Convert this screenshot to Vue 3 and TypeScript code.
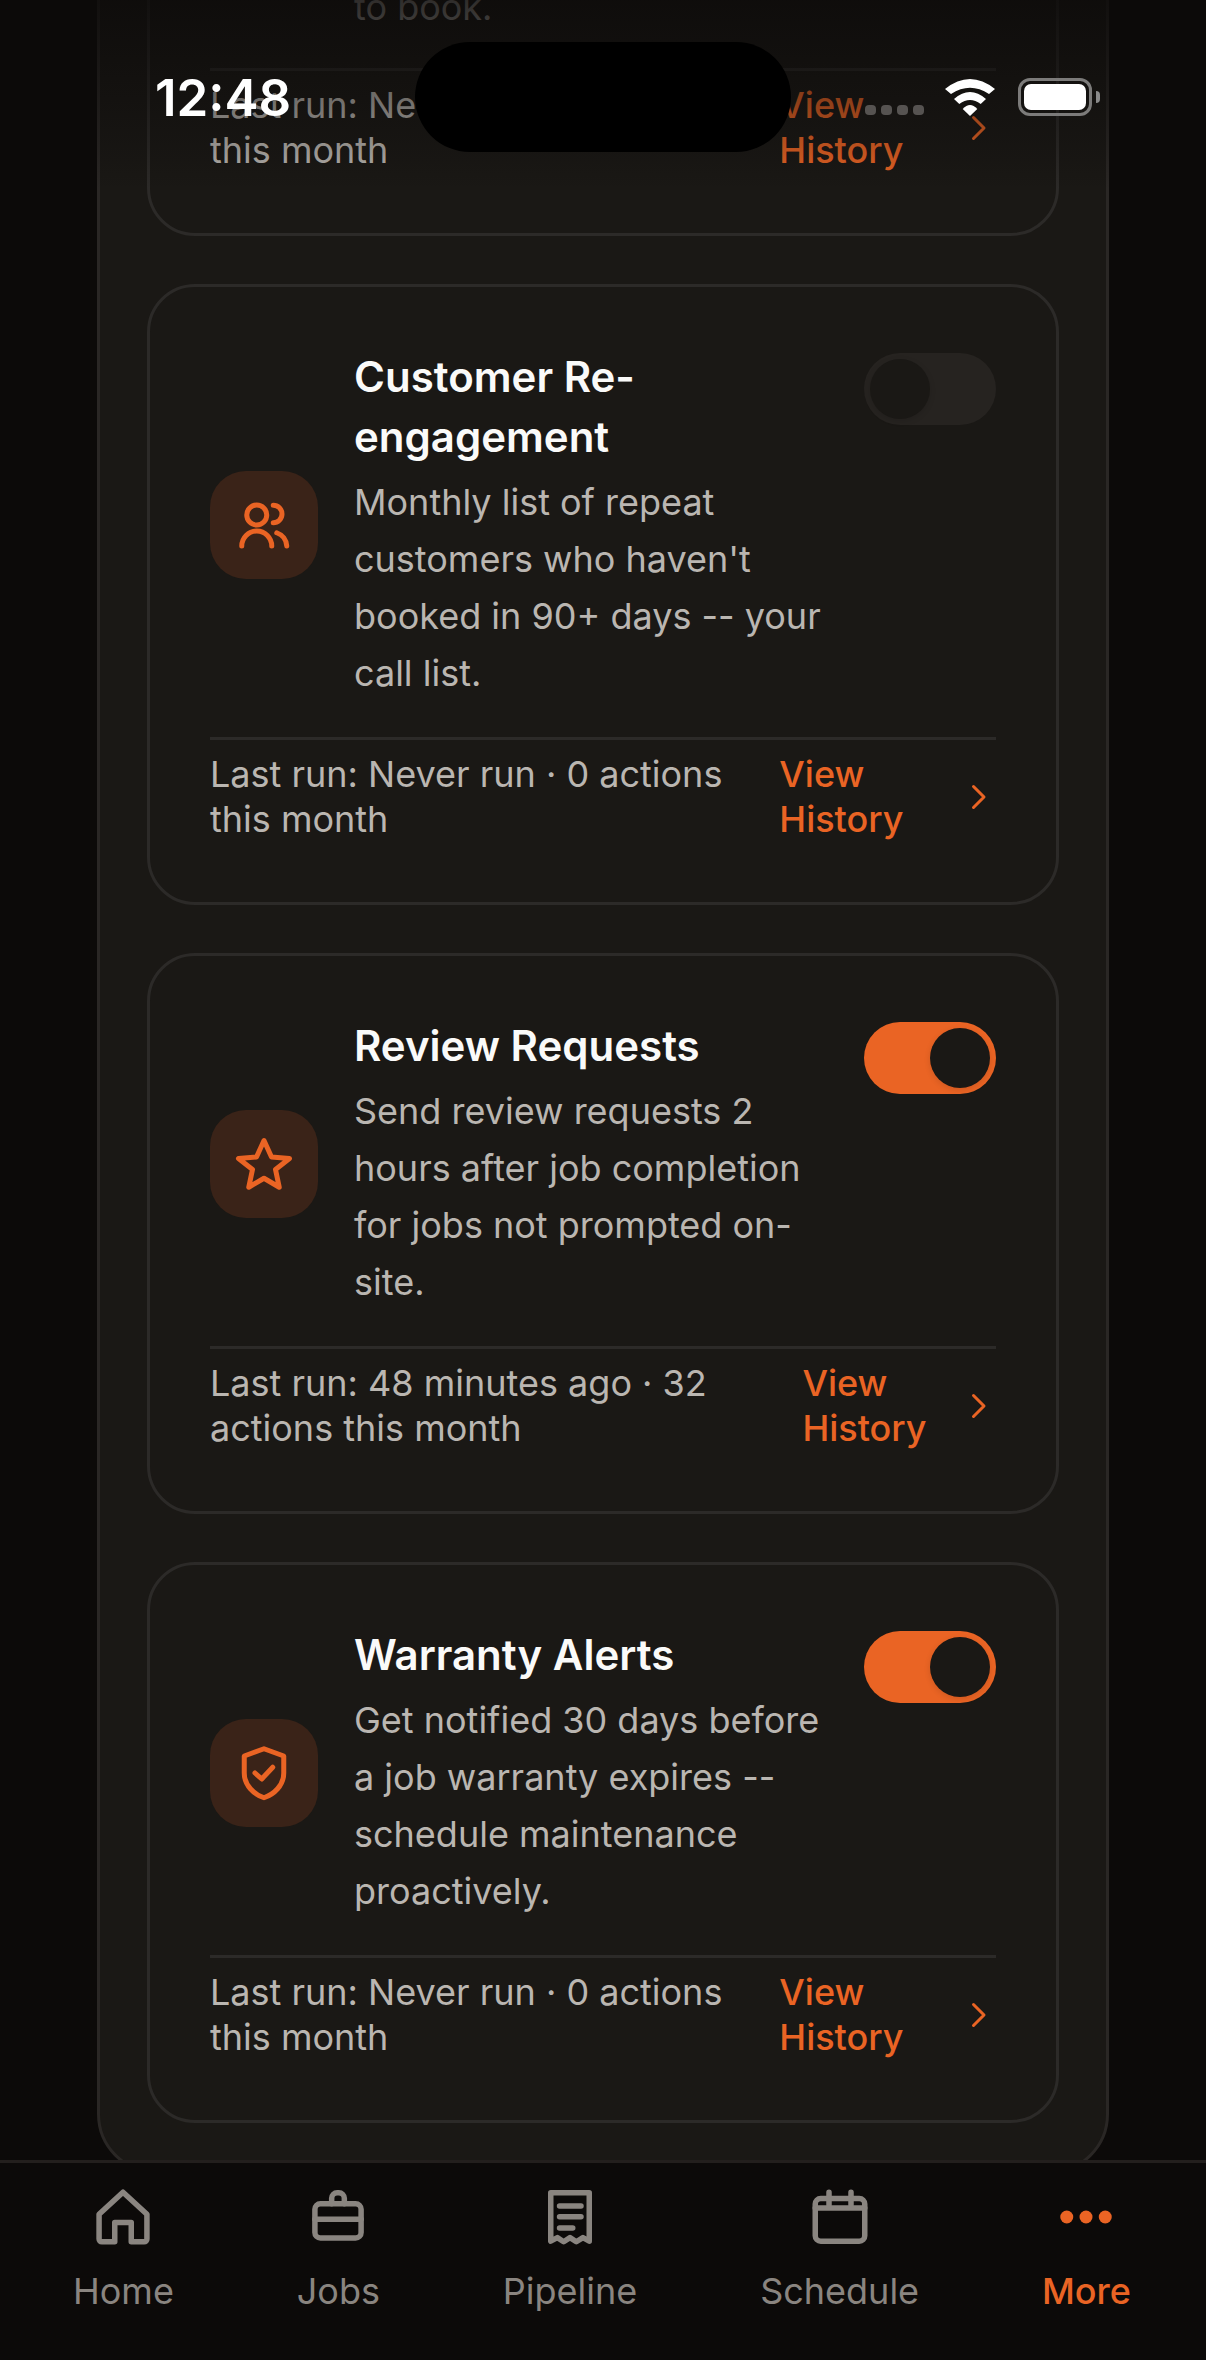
<script setup lang="ts">
type Automation = {
  id: string
  title: string
  desc: string
  icon: 'users' | 'star' | 'shield'
  on: boolean
  lastRun: string
}

const automations: Automation[] = [
  {
    id: 'reengage',
    title: 'Customer Re-engagement',
    desc: "Monthly list of repeat customers who haven't booked in 90+ days -- your call list.",
    icon: 'users',
    on: false,
    lastRun: 'Last run: Never run · 0 actions this month',
  },
  {
    id: 'reviews',
    title: 'Review Requests',
    desc: 'Send review requests 2 hours after job completion for jobs not prompted on-site.',
    icon: 'star',
    on: true,
    lastRun: 'Last run: 48 minutes ago · 32 actions this month',
  },
  {
    id: 'warranty',
    title: 'Warranty Alerts',
    desc: 'Get notified 30 days before a job warranty expires -- schedule maintenance proactively.',
    icon: 'shield',
    on: true,
    lastRun: 'Last run: Never run · 0 actions this month',
  },
]

const tabs = [
  { id: 'home', label: 'Home' },
  { id: 'jobs', label: 'Jobs' },
  { id: 'pipeline', label: 'Pipeline' },
  { id: 'schedule', label: 'Schedule' },
  { id: 'more', label: 'More' },
]
</script>

<template>
  <div class="screen">
    <div class="scroll">
      <section class="panel">
        <!-- previous card, scrolled mostly out of view -->
        <article class="card card-cut">
          <p class="desc desc-cut">to book.</p>
          <div class="foot">
            <span class="foot-text">Last run: Never run · 0 actions this month</span>
            <a class="foot-link">
              <span>View History</span>
              <svg class="chev" viewBox="0 0 24 24"><path d="M9 5l7 7-7 7" /></svg>
            </a>
          </div>
        </article>

        <article v-for="a in automations" :key="a.id" class="card">
          <div class="head">
            <div class="icon-box">
              <svg v-if="a.icon === 'users'" viewBox="0 0 24 24">
                <circle cx="9.1" cy="8" r="4" />
                <path d="M3.1 20.4a6 6 0 0 1 12 0" />
                <path d="M15.7 4.1a3.5 3.5 0 0 1 0 7" />
                <path d="M17.1 15.1a6 6 0 0 1 4 5.3" />
              </svg>
              <svg v-else-if="a.icon === 'star'" viewBox="0 0 24 24">
                <path d="M12 2.6L15 9.2L22.2 9.8L16.6 14.2L18.1 21.3L12 17.7L5.9 21.3L7.4 14.2L1.800 9.800L9 9.200Z" />
              </svg>
              <svg v-else viewBox="0 0 24 24">
                <path d="M12 2.3L19.9 5.200V12C19.9 17 16 20.500 12 21.900C8 20.500 4.100 17 4.100 12V5.200Z" />
                <path d="M8.400 12L11.100 14.400L15.500 9.700" />
              </svg>
            </div>
            <div class="body">
              <h3 class="title">{{ a.title }}</h3>
              <p class="desc">{{ a.desc }}</p>
            </div>
            <div class="toggle" :class="{ on: a.on }"><span class="knob"></span></div>
          </div>
          <div class="foot">
            <span class="foot-text">{{ a.lastRun }}</span>
            <a class="foot-link">
              <span>View History</span>
              <svg class="chev" viewBox="0 0 24 24"><path d="M9 5l7 7-7 7" /></svg>
            </a>
          </div>
        </article>
      </section>
    </div>

    <nav class="tabbar">
      <div v-for="t in tabs" :key="t.id" class="tab" :class="{ active: t.id === 'more' }">
        <svg v-if="t.id === 'home'" viewBox="0 0 24 24">
          <path d="M3.300 11L12 3L20.700 11V20a1 1 0 0 1-1 1H15V14H9V21H4.300a1 1 0 0 1-1-1z" />
        </svg>
        <svg v-else-if="t.id === 'jobs'" viewBox="0 0 24 24">
          <rect x="3.600" y="7.200" width="16.800" height="12.400" rx="2" />
          <path d="M9.700 7.200V5.200a2 2 0 0 1 2-2h.6a2 2 0 0 1 2 2V7.200" />
          <path d="M3.600 12.800H20.400" />
        </svg>
        <svg v-else-if="t.id === 'pipeline'" viewBox="0 0 24 24">
          <path d="M5 3.200H19V20.800l-2.300-1.300-2.400 1.500-2.300-1.500-2.300 1.500-2.300-1.500L5 20.800z" />
          <path d="M8.200 8H16M8.200 11.900H16M8.200 16H13" />
        </svg>
        <svg v-else-if="t.id === 'schedule'" viewBox="0 0 24 24">
          <rect x="3" y="5.300" width="18" height="15.500" rx="2" />
          <path d="M8 3V7.500M16 3V7.500M3 8.700H21" />
        </svg>
        <svg v-else viewBox="0 0 24 24" class="dots">
          <circle cx="5" cy="12" r="2.360" />
          <circle cx="12" cy="12" r="2.360" />
          <circle cx="19" cy="12" r="2.360" />
        </svg>
        <span class="tab-label">{{ t.label }}</span>
      </div>
    </nav>

    <!-- device chrome floating over the content -->
    <div class="scrim"></div>
    <div class="island"></div>
    <span class="clock">12:48</span>
    <div class="status">
      <span class="signal"><i></i><i></i><i></i><i></i></span>
      <svg class="wifi" viewBox="0 0 50 37">
        <path d="M0 10Q25 -10 50 10L44 15Q25 2.400 6 15Z" />
        <path d="M9 20Q25 6 41 20L35.700 25Q25 17 14.300 25Z" />
        <path d="M17.700 30Q25 22 32.300 30L25 37Z" />
      </svg>
      <span class="battery"><span class="battery-fill"></span></span>
      <span class="battery-nub"></span>
    </div>
  </div>
</template>

<style scoped>
.screen {
  position: relative;
  width: 1206px;
  height: 2360px;
  overflow: hidden;
  display: flex;
  flex-direction: column;
  background: #0c0a09;
  font-family: Inter, "Liberation Sans", sans-serif;
  color: #fafaf9;
}

.scroll {
  flex: 1;
  min-height: 0;
  overflow: hidden;
  padding: 0 97px;
}

.panel {
  margin-top: -140px;
  padding: 53px 47px 48px;
  border: 3px solid #2a2725;
  border-radius: 60px;
  background: #1a1815;
  display: flex;
  flex-direction: column;
  gap: 48px;
}

.card {
  padding: 60px;
  border: 3px solid #2c2a28;
  border-radius: 48px;
  background: #1a1815;
}

.head {
  display: flex;
  align-items: center;
  gap: 36px;
}

.icon-box {
  flex: none;
  width: 108px;
  height: 108px;
  border-radius: 36px;
  background: #3a2318;
  display: flex;
  align-items: center;
  justify-content: center;
}

.icon-box svg {
  width: 60px;
  height: 60px;
  fill: none;
  stroke: #ea6424;
  stroke-width: 2;
  stroke-linecap: round;
  stroke-linejoin: round;
}

.body {
  flex: 1;
  min-width: 0;
}

.title {
  margin: 0;
  font-size: 42px;
  line-height: 60px;
  font-weight: 600;
  color: #fafaf9;
}

.desc {
  margin: 7px 0 0;
  font-size: 36px;
  line-height: 57px;
  color: #bab6b1;
}

.desc-cut {
  margin: 0 0 -3px 144px;
}

.toggle {
  flex: none;
  align-self: flex-start;
  margin-top: 6px;
  width: 132px;
  height: 72px;
  padding: 6px;
  box-sizing: border-box;
  border-radius: 36px;
  background: #262320;
  display: flex;
}

.toggle.on {
  background: #ea6424;
  justify-content: flex-end;
}

.knob {
  width: 60px;
  height: 60px;
  border-radius: 50%;
  background: #1a1815;
  box-shadow: 0 2px 6px rgba(0, 0, 0, 0.12);
}

.foot {
  margin-top: 35px;
  padding-top: 12px;
  border-top: 3px solid #2c2a28;
  display: flex;
  align-items: center;
  justify-content: space-between;
  gap: 36px;
  font-size: 36px;
  line-height: 45px;
}

.foot-text {
  color: #bab6b1;
}

.foot-link {
  display: flex;
  align-items: center;
  gap: 30px;
  color: #ea6424;
  font-weight: 500;
}

.chev {
  flex: none;
  width: 36px;
  height: 36px;
  fill: none;
  stroke: #ea6424;
  stroke-width: 2;
  stroke-linecap: round;
  stroke-linejoin: round;
}

.tabbar {
  flex: none;
  height: 200px;
  box-sizing: border-box;
  border-top: 3px solid #231f1d;
  background: #0c0a09;
  display: flex;
  justify-content: space-between;
  padding: 21px 75px 0 73px;
}

.tab {
  display: flex;
  flex-direction: column;
  align-items: center;
  gap: 14px;
  color: #8a8580;
  font-size: 36px;
  line-height: 54px;
}

.tab svg {
  width: 66px;
  height: 66px;
  fill: none;
  stroke: #8a8580;
  stroke-width: 2;
  stroke-linecap: round;
  stroke-linejoin: round;
}

.tab.active {
  color: #ea6424;
  font-weight: 500;
}

.tab svg.dots {
  fill: #ea6424;
  stroke: none;
}

.scrim {
  position: absolute;
  left: 0;
  right: 0;
  top: 0;
  height: 190px;
  background: linear-gradient(
    to bottom,
    rgba(12, 10, 9, 0.8) 0,
    rgba(12, 10, 9, 0.42) 100px,
    rgba(12, 10, 9, 0.2) 150px,
    rgba(12, 10, 9, 0) 190px
  );
}

.island {
  position: absolute;
  left: 415px;
  top: 42px;
  width: 376px;
  height: 110px;
  border-radius: 55px;
  background: #000;
}

.clock {
  position: absolute;
  left: 155px;
  top: 69px;
  font-size: 51px;
  line-height: 58px;
  font-weight: 600;
  color: #fff;
}

.status {
  position: absolute;
  left: 865px;
  top: 78px;
  height: 38px;
  display: flex;
  align-items: center;
}

.signal {
  display: flex;
  gap: 5px;
  margin-top: 26px;
}

.signal i {
  width: 11px;
  height: 10px;
  border-radius: 4px;
  background: #565351;
}

.wifi {
  width: 50px;
  height: 37px;
  margin-left: 21px;
  fill: #fff;
}

.battery {
  margin-left: 23px;
  width: 74px;
  height: 38px;
  padding: 3px;
  box-sizing: border-box;
  border: 3px solid #7c7b7a;
  border-radius: 12px;
  display: flex;
}

.battery-fill {
  flex: 1;
  border-radius: 7px;
  background: #fff;
}

.battery-nub {
  width: 4px;
  height: 12px;
  margin-left: 4px;
  border-radius: 0 4px 4px 0;
  background: #8a8a8a;
}
</style>
